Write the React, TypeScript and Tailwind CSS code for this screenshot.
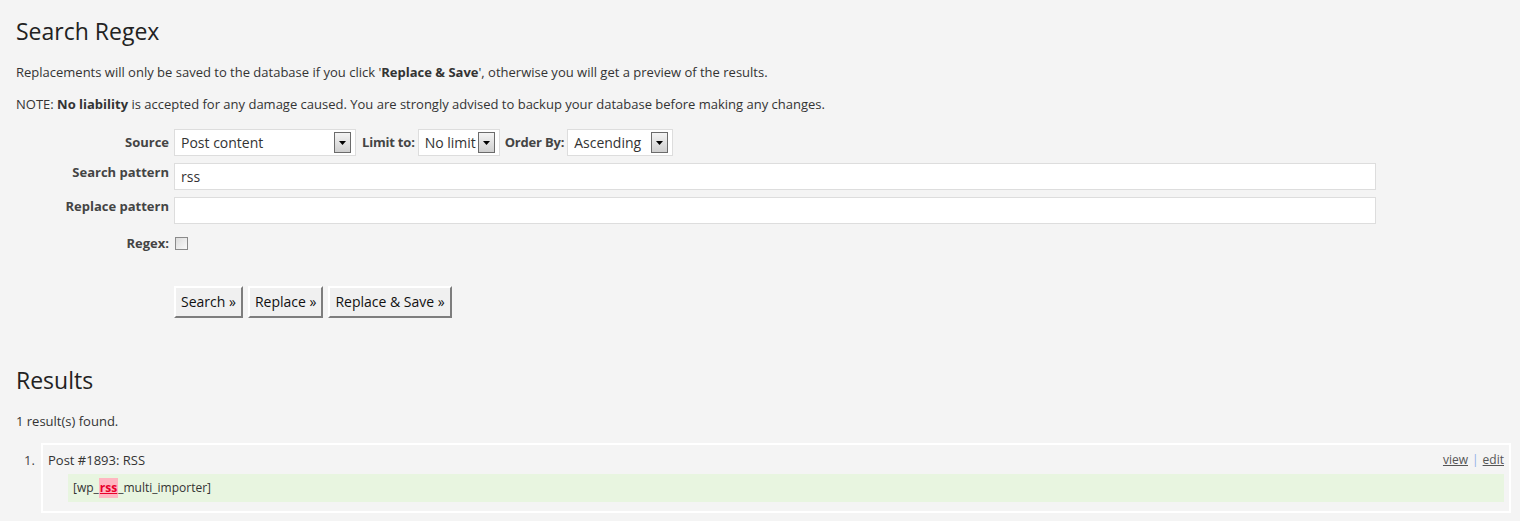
import React from "react";

const Select: React.FC<{ value: string; width: string }> = ({ value, width }) => (
  <div className={`${width} h-[27px] bg-white border border-[#dddddd] flex items-center justify-between pl-[6px] pr-[4px] text-[14px] text-[#333]`}>
    <span>{value}</span>
    <span className="w-[17px] h-[21px] border border-[#6b6b6b] bg-gradient-to-b from-[#f4f4f4] to-[#cfcfcf] flex items-center justify-center">
      <svg width="7" height="4" viewBox="0 0 7 4">
        <path d="M0 0h7L3.5 4z" fill="#000" />
      </svg>
    </span>
  </div>
);

const Btn: React.FC<{ label: string }> = ({ label }) => (
  <button className="h-[32px] px-[5px] bg-[#f0f0f0] text-[14px] text-[#111] border-t-2 border-l-2 border-t-white border-l-white border-b-2 border-r-2 border-b-[#7d7d7d] border-r-[#7d7d7d]">
    {label}
  </button>
);

export default function App() {
  return (
    <div
      className="min-h-screen bg-[#f4f4f4] text-[#333] pl-[16px] pr-[9px] pt-[15px]"
      style={{ fontFamily: '"Open Sans", sans-serif' }}
    >
      <h2 className="text-[23px] leading-[32px] text-[#222] font-normal">Search Regex</h2>
      <p className="text-[13px] mt-[16px] leading-[18px]">
        Replacements will only be saved to the database if you click '<b>Replace &amp; Save</b>', otherwise you will get a preview of the results.
      </p>
      <p className="text-[13px] mt-[14px] leading-[18px]">
        NOTE: <b>No liability</b> is accepted for any damage caused. You are strongly advised to backup your database before making any changes.
      </p>

      <div className="mt-[16px] flex flex-col text-[13px]">
        <div className="flex items-center">
          <div className="w-[153px] text-right font-bold text-[#444] mr-[5px]">Source</div>
          <Select value="Post content" width="w-[182px]" />
          <span className="font-bold text-[#444] tracking-[-0.2px] ml-[6px] mr-[3px]">Limit to:</span>
          <Select value="No limit" width="w-[82px]" />
          <span className="font-bold text-[#444] tracking-[-0.2px] ml-[5px] mr-[3px]">Order By:</span>
          <Select value="Ascending" width="w-[106px]" />
        </div>
        <div className="flex items-start gap-[5px] mt-[7px]">
          <div className="w-[153px] text-right font-bold text-[#444]">Search pattern</div>
          <div className="w-[1202px] h-[27px] bg-white border border-[#dddddd] flex items-center pl-[6px] text-[14px] text-[#333]">
            rss
          </div>
        </div>
        <div className="flex items-start gap-[5px] mt-[7px]">
          <div className="w-[153px] text-right font-bold text-[#444]">Replace pattern</div>
          <div className="w-[1202px] h-[27px] bg-white border border-[#dddddd]" />
        </div>
        <div className="flex items-center gap-[5px] mt-[10px]">
          <div className="w-[153px] text-right font-bold text-[#444]">Regex:</div>
          <span className="w-[13px] h-[13px] border border-[#8a8a8a] bg-gradient-to-br from-[#dcdcdc] to-[#fafafa] ml-[1px]" />
        </div>
        <div className="flex gap-[5px] ml-[158px] mt-[32px]">
          <Btn label="Search »" />
          <Btn label="Replace »" />
          <Btn label="Replace & Save »" />
        </div>
      </div>

      <h2 className="text-[23px] leading-[32px] text-[#222] font-normal mt-[46px]">Results</h2>
      <p className="text-[13px] mt-[16px] leading-[18px]">1 result(s) found.</p>

      <div className="flex mt-[13px]">
        <div className="w-[25px] pl-[8px] pt-[8px] text-[13px] text-[#444]">1.</div>
        <div className="flex-1 border-2 border-white px-[5px] pt-[6px] pb-[9px]">
          <div className="flex justify-between text-[13px] leading-[18px]">
            <span>Post #1893: RSS</span>
            <span className="text-[12px] text-[#555]">
              <span className="underline">view</span>
              <span className="text-[#8fb0e8] mx-[4px]">|</span>
              <span className="underline">edit</span>
            </span>
          </div>
          <div className="mt-[5px] ml-[20px] bg-[#e8f5e0] h-[28px] flex items-center pl-[5px] text-[12px] text-[#333]">
            [wp_
            <span className="bg-[#ffb6c1] text-[#e8002a] font-bold underline px-[1px] h-[20px] flex items-center">rss</span>
            _multi_importer]
          </div>
        </div>
      </div>
    </div>
  );
}
